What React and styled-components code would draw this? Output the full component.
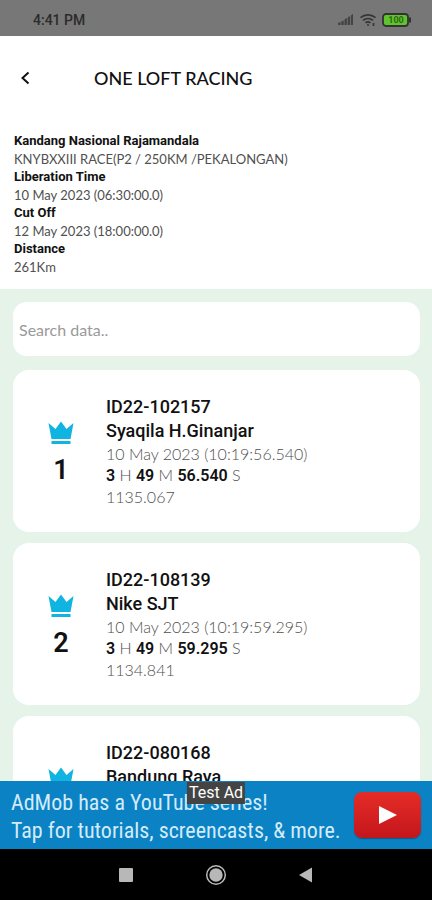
import React from 'react';
import styled, { createGlobalStyle, ThemeProvider } from 'styled-components';

const theme = {
    colors: {
        mint: '#e6f3e9',
        ink: '#111111',
        dull: '#505050',
        placeholder: '#9a9a9a',
        crown: '#0fb4e0',
        adBlue: '#0a82c4',
        adText: '#d3ebfa',
        status: '#777777',
    },
    fonts: {
        strong: "Roboto, 'Liberation Sans', sans-serif",
        light: "Lato, 'Open Sans', sans-serif",
        narrow: "'Roboto Condensed', 'Liberation Sans Narrow', Roboto, sans-serif",
    },
};

const GlobalStyle = createGlobalStyle`
    * {
        box-sizing: border-box;
    }
    body {
        margin: 0;
        background: #000;
    }
    h1, h2, h3, p, dl, dt, dd, ol {
        margin: 0;
        padding: 0;
    }
    button {
        border: 0;
        padding: 0;
        background: none;
        cursor: pointer;
    }
    svg {
        display: block;
    }
`;

const Screen = styled.div`
    display: flex;
    flex-direction: column;
    height: 100vh;
    overflow: hidden;
    background: white;
    color: ${({ theme }) => theme.colors.ink};
    font-family: ${({ theme }) => theme.fonts.strong};
`;

const StatusBar = styled.div`
    display: flex;
    flex: none;
    align-items: center;
    justify-content: space-between;
    height: 36px;
    padding: 3px 20px 0 33px;
    background: ${({ theme }) => theme.colors.status};
    color: #2b2b2b;
    font-size: 14px;
    font-weight: 500;
`;

const StatusIcons = styled.div`
    display: flex;
    align-items: center;
    gap: 5px;
`;

const Header = styled.header`
    display: flex;
    flex: none;
    align-items: center;
    height: 83px;
    padding: 0 13px;
`;

const BackButton = styled.button`
    display: flex;
    align-items: center;
    justify-content: center;
    width: 24px;
    height: 32px;
`;

const Title = styled.h1`
    padding-left: 57px;
    font-family: ${({ theme }) => theme.fonts.light};
    font-size: 18px;
    font-weight: 500;
    line-height: 24px;
`;

const RaceInfo = styled.dl`
    flex: none;
    padding: 13px 14px;
    font-size: 13px;
    line-height: 18px;
    dt {
        font-weight: 700;
    }
    dd {
        color: ${({ theme }) => theme.colors.dull};
        font-family: ${({ theme }) => theme.fonts.light};
    }
`;

const Results = styled.main`
    display: flex;
    flex: 1;
    flex-direction: column;
    gap: 14px;
    min-height: 0;
    padding: 13px 12px 0 13px;
    overflow: hidden;
    background: ${({ theme }) => theme.colors.mint};
`;

const Search = styled.input`
    flex: none;
    width: 100%;
    height: 54px;
    padding: 0 6px;
    border: 0;
    border-radius: 14px;
    outline: 0;
    background: white;
    font-family: ${({ theme }) => theme.fonts.light};
    font-size: 16px;
    &::placeholder {
        color: ${({ theme }) => theme.colors.placeholder};
        opacity: 1;
    }
`;

const List = styled.ol`
    display: flex;
    flex-direction: column;
    gap: 11px;
    list-style: none;
`;

const Card = styled.li`
    display: flex;
    gap: 21px;
    min-height: 162px;
    padding: 25px 24px;
    border-radius: 16px;
    background: white;
`;

const Rank = styled.div`
    display: flex;
    flex: none;
    flex-direction: column;
    align-items: center;
    gap: 10px;
    width: 48px;
    padding-top: 26px;
    font-size: 27px;
    font-weight: 600;
    line-height: 30px;
`;

const Details = styled.div`
    min-width: 0;
    white-space: nowrap;
`;

const Name = styled.h2`
    font-size: 18px;
    font-weight: 500;
    line-height: 24px;
`;

const Line = styled.p`
    color: ${({ theme }) => theme.colors.dull};
    font-family: ${({ theme }) => theme.fonts.light};
    font-size: 16px;
    font-weight: 300;
    line-height: 21px;
    b {
        color: ${({ theme }) => theme.colors.ink};
        font-family: ${({ theme }) => theme.fonts.strong};
        font-weight: 600;
    }
`;

const AdBanner = styled.aside`
    position: relative;
    display: flex;
    flex: none;
    align-items: center;
    justify-content: space-between;
    height: 68px;
    padding: 0 11px;
    background: ${({ theme }) => theme.colors.adBlue};
`;

const AdText = styled.p`
    padding-top: 3px;
    color: ${({ theme }) => theme.colors.adText};
    font-family: ${({ theme }) => theme.fonts.narrow};
    font-size: 22px;
    line-height: 28px;
    white-space: nowrap;
`;

const AdLabel = styled.span`
    position: absolute;
    top: 1px;
    left: 50%;
    padding: 0 2px;
    transform: translateX(-50%);
    background: #444;
    color: white;
    font-size: 16px;
    line-height: 22px;
    white-space: nowrap;
`;

const PlayButton = styled.button`
    display: flex;
    flex: none;
    align-items: center;
    justify-content: center;
    width: 67px;
    height: 46px;
    border-radius: 8px;
    background: linear-gradient(#e52d27, #c4161c);
    box-shadow: 0 1px 1px rgba(0, 0, 0, 0.3);
`;

const NavBar = styled.nav`
    display: flex;
    flex: none;
    align-items: center;
    justify-content: center;
    gap: 66px;
    height: 51px;
    background: black;
`;

const NavButton = styled.button`
    display: flex;
    align-items: center;
    justify-content: center;
    width: 24px;
    height: 24px;
`;

const SignalIcon = () => (
    <svg width="17" height="13" viewBox="0 0 17 13" fill="#444">
        <path d="M1 12v-2l2.500-1v3zM4.300 12V8.500l2.400-1V12zM7.500 12V6.500l2.400-1.500v7zM10.700 12V4.500l2.300-1.500v9zM13.800 12V2.500L16 1v11z" />
    </svg>
);

const WifiIcon = () => (
    <svg width="18" height="14" viewBox="0 0 18 14" fill="none" stroke="#363636" strokeWidth="1.700">
        <path d="M1.500 4.600c4.200-3.700 10.800-3.700 15 0M4 7.400c2.900-2.500 7.100-2.500 10 0M6.500 9.900c1.500-1.200 3.500-1.200 5 0" />
        <circle cx="9" cy="12" r="1" fill="#363636" stroke="none" />
        <path d="M14.500 10v3" />
    </svg>
);

const BatteryIcon = () => (
    <svg width="30" height="14" viewBox="0 0 30 14">
        <rect x="1" y="1" width="25" height="12" rx="3" fill="#60c42c" stroke="#333" strokeWidth="1.800" />
        <path d="M27 4.500h2v5h-2z" fill="#333" />
        <text x="14" y="10" textAnchor="middle" fontFamily="Roboto, sans-serif" fontSize="9" fontWeight="700" fill="#2f6718">100</text>
    </svg>
);

const BackIcon = () => (
    <svg width="12" height="16" viewBox="0 0 12 16" fill="none" stroke="#111" strokeWidth="2">
        <path d="M9.500 2.500L3.500 8l6 5.500" />
    </svg>
);

const CrownIcon = () => (
    <svg width="26" height="24" viewBox="0 0 26 24" fill={theme.colors.crown}>
        <path d="M3.500 18L.500 2l7 6L13 .500 18.500 8l7-6-3 16zM3.500 20h19v3h-19z" />
    </svg>
);

const pigeons = [
    { ring: 'ID22-102157', owner: 'Syaqila H.Ginanjar', arrived: '10 May 2023 (10:19:56.540)', seconds: '56.540', velocity: '1135.067' },
    { ring: 'ID22-108139', owner: 'Nike SJT', arrived: '10 May 2023 (10:19:59.295)', seconds: '59.295', velocity: '1134.841' },
    { ring: 'ID22-080168', owner: 'Bandung Raya' },
];

const PigeonCard = ({ rank, pigeon }) => (
    <Card>
        <Rank>
            <CrownIcon />
            {pigeon.arrived && <span>{rank}</span>}
        </Rank>
        <Details>
            <Name>{pigeon.ring}</Name>
            <Name as="h3">{pigeon.owner}</Name>
            {pigeon.arrived && (
                <>
                    <Line>{pigeon.arrived}</Line>
                    <Line><b>3</b> H <b>49</b> M <b>{pigeon.seconds}</b> S</Line>
                    <Line>{pigeon.velocity}</Line>
                </>
            )}
        </Details>
    </Card>
);

export default function App() {
    return (
        <ThemeProvider theme={theme}>
            <GlobalStyle />
            <Screen>
                <StatusBar>
                    <span>4:41 PM</span>
                    <StatusIcons>
                        <SignalIcon />
                        <WifiIcon />
                        <BatteryIcon />
                    </StatusIcons>
                </StatusBar>
                <Header>
                    <BackButton aria-label="Back"><BackIcon /></BackButton>
                    <Title>ONE LOFT RACING</Title>
                </Header>
                <RaceInfo>
                    <dt>Kandang Nasional Rajamandala</dt>
                    <dd>KNYBXXIII RACE(P2 / 250KM /PEKALONGAN)</dd>
                    <dt>Liberation Time</dt>
                    <dd>10 May 2023 (06:30:00.0)</dd>
                    <dt>Cut Off</dt>
                    <dd>12 May 2023 (18:00:00.0)</dd>
                    <dt>Distance</dt>
                    <dd>261Km</dd>
                </RaceInfo>
                <Results>
                    <Search type="search" placeholder="Search data.." aria-label="Search data" />
                    <List>
                        {pigeons.map((pigeon, i) => (
                            <PigeonCard key={pigeon.ring} rank={i + 1} pigeon={pigeon} />
                        ))}
                    </List>
                </Results>
                <AdBanner>
                    <AdText>
                        AdMob has a YouTube series!
                        <br />
                        Tap for tutorials, screencasts, &amp; more.
                    </AdText>
                    <PlayButton aria-label="Play">
                        <svg width="20" height="20" viewBox="0 0 20 20" fill="white"><path d="M1 1l18 9-18 9z" /></svg>
                    </PlayButton>
                    <AdLabel>Test Ad</AdLabel>
                </AdBanner>
                <NavBar>
                    <NavButton aria-label="Recent apps">
                        <svg width="14" height="14" viewBox="0 0 14 14"><rect width="14" height="14" rx="1" fill="#b8b8b8" /></svg>
                    </NavButton>
                    <NavButton aria-label="Home">
                        <svg width="22" height="22" viewBox="0 0 22 22">
                            <circle cx="11" cy="11" r="9.300" fill="none" stroke="#b8b8b8" strokeWidth="1.500" />
                            <circle cx="11" cy="11" r="6.700" fill="#b8b8b8" />
                        </svg>
                    </NavButton>
                    <NavButton aria-label="Back">
                        <svg width="14" height="16" viewBox="0 0 14 16" fill="#b8b8b8"><path d="M0 8l13-7.500v15z" /></svg>
                    </NavButton>
                </NavBar>
            </Screen>
        </ThemeProvider>
    );
}
